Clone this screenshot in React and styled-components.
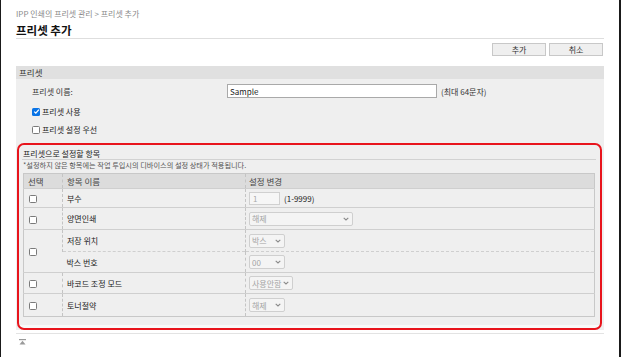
import React from "react";
import styled, { createGlobalStyle } from "styled-components";

const GlobalStyle = createGlobalStyle`
  html, body {
    margin: 0;
    padding: 0;
    background: #fff;
  }
  body {
    font-family: "Noto Sans CJK KR", "Noto Sans", sans-serif;
    color: #333;
  }
`;

const Frame = styled.div`
  width: 621px;
  height: 357px;
  box-sizing: border-box;
  border-left: 1px solid #1a1a1a;
  border-right: 2px solid #1a1a1a;
  padding: 0 15px;
  overflow: hidden;
`;

const Breadcrumb = styled.div`
  padding-top: 9px;
  font-size: 8px;
  line-height: 10px;
  color: #8a8a8a;
`;

const Title = styled.h1`
  margin: 4px 0 0;
  font-size: 11.5px;
  line-height: 15px;
  font-weight: 700;
  color: #111;
  border-bottom: 1px solid #dedede;
`;

const ButtonBar = styled.div`
  display: flex;
  justify-content: flex-end;
  gap: 3px;
  margin-top: 4px;
  padding-right: 1px;
`;

const Button = styled.button`
  width: 54px;
  height: 13px;
  padding: 0;
  border: 1px solid #c8c8c8;
  background: #efefef;
  font-family: inherit;
  font-size: 8px;
  line-height: 11px;
  color: #333;
`;

const SectionHeader = styled.div`
  margin-top: 10px;
  height: 13px;
  padding-left: 3px;
  background: #e0e0e0;
  font-size: 8.5px;
  line-height: 13px;
  color: #333;
`;

const Panel = styled.div`
  background: #efefef;
  padding-top: 5px;
`;

const FieldRow = styled.div`
  display: flex;
  align-items: center;
  height: 14px;
  padding-left: 16px;
  font-size: 8px;
`;

const Label = styled.span`
  width: 195px;
  color: #333;
`;

const TextInput = styled.input`
  width: 210px;
  height: 14px;
  box-sizing: border-box;
  border: 1px solid #a9a9a9;
  padding: 0 2px;
  font-family: inherit;
  font-size: 8px;
  color: #222;
  background: #fff;
  outline: none;
`;

const Hint = styled.span`
  margin-left: 4px;
  color: #333;
`;

const CheckRow = styled.label`
  display: flex;
  align-items: center;
  gap: 2px;
  height: 15px;
  padding-left: 16px;
  margin-top: ${(p) => (p.$first ? 6 : 3)}px;
  font-size: 8px;
  color: #222;
`;

const Box = styled.span`
  display: inline-flex;
  align-items: center;
  justify-content: center;
  width: 8px;
  height: 8px;
  box-sizing: border-box;
  border-radius: 1.5px;
  border: ${(p) => (p.$checked ? "none" : "1px solid #7a7a7a")};
  background: ${(p) => (p.$checked ? "#0a74e6" : "#fff")};
  flex: none;
  vertical-align: middle;
`;

function Check({ checked }) {
  return (
    <Box $checked={checked}>
      {checked && (
        <svg width="7" height="7" viewBox="0 0 7 7">
          <path d="M1.2 3.6 L2.8 5.1 L5.9 1.6" stroke="#fff" strokeWidth="1.3" fill="none" />
        </svg>
      )}
    </Box>
  );
}

const Highlight = styled.div`
  margin: 6px 2px 0 1px;
  padding: 0 4px 11px 3px;
  border: 2px solid #e8141c;
  border-radius: 7px;
  background: linear-gradient(to bottom, #efefef calc(100% - 3px), #f9f9f9 0);
`;

const BoxTitle = styled.div`
  padding: 3px 0 0 1px;
  font-size: 8px;
  line-height: 11px;
  color: #222;
  border-bottom: 1px solid #d2d2d2;
`;

const Note = styled.div`
  padding-left: 1px;
  font-size: 7.2px;
  line-height: 10px;
  color: #555;
`;

const Table = styled.table`
  width: calc(100% - 2px);
  margin: 3px 1px 0;
  border-collapse: collapse;
  table-layout: fixed;
  border: 1px solid #c8c8c8;
  font-size: 8px;
  color: #222;
`;

const HeadRow = styled.tr`
  height: 15px;
  background: #dcdcdc;
`;

const Th = styled.th`
  box-sizing: border-box;
  padding: 0 0 0 ${(p) => p.$pad || 4}px;
  width: ${(p) => (p.$w ? `${p.$w}px` : "auto")};
  text-align: left;
  font-weight: 400;
  font-size: 8.5px;
  color: #444;
  border-left: 1px dashed #c4c4c4;
  &:first-child {
    border-left: none;
  }
`;

const Row = styled.tr`
  height: ${(p) => p.$h}px;
  border-top: ${(p) => (p.$dashed ? "1px dashed #cfcfcf" : "1px solid #cfcfcf")};
`;

const Td = styled.td`
  padding: 0 0 0 ${(p) => p.$pad || 4}px;
  vertical-align: middle;
  border-left: 1px dashed #c4c4c4;
  &:first-child {
    border-left: none;
  }
`;

const CheckCell = styled(Td)`
  padding-left: 5px;
  border-left: none;
`;

const NumInput = styled.span`
  display: inline-flex;
  align-items: center;
  width: 31px;
  height: 13px;
  box-sizing: border-box;
  border: 1px solid #d0d0d0;
  padding-left: 3px;
  background: #f6f6f6;
  color: #aaa;
  vertical-align: middle;
`;

const Range = styled.span`
  margin-left: 4px;
  vertical-align: middle;
`;

const SelectBox = styled.span`
  display: inline-flex;
  align-items: center;
  justify-content: space-between;
  width: ${(p) => p.$w}px;
  height: 14px;
  box-sizing: border-box;
  padding: 0 3px 0 2px;
  border: 1px solid #cfcfcf;
  border-radius: 2px;
  background: #f4f4f4;
  color: #a4a4a4;
  vertical-align: middle;
`;

function Select({ w, value }) {
  return (
    <SelectBox $w={w}>
      <span>{value}</span>
      <svg width="6" height="4" viewBox="0 0 6 4">
        <path d="M0.7 0.8 L3 3 L5.3 0.8" stroke="#8a8a8a" strokeWidth="1.1" fill="none" />
      </svg>
    </SelectBox>
  );
}

const Footer = styled.div`
  display: flex;
  align-items: flex-start;
  margin-top: 3px;
  border-top: 1px solid #e3e3e3;
  padding: 5px 0 0 3px;
`;

export default function App() {
  return (
    <>
      <GlobalStyle />
      <Frame>
        <Breadcrumb>IPP 인쇄의 프리셋 관리 &gt; 프리셋 추가</Breadcrumb>
        <Title>프리셋 추가</Title>
        <ButtonBar>
          <Button>추가</Button>
          <Button>취소</Button>
        </ButtonBar>
        <SectionHeader>프리셋</SectionHeader>
        <Panel>
          <FieldRow>
            <Label>프리셋 이름:</Label>
            <TextInput defaultValue="Sample" />
            <Hint>(최대 64문자)</Hint>
          </FieldRow>
          <CheckRow $first>
            <Check checked />
            프리셋 사용
          </CheckRow>
          <CheckRow>
            <Check />
            프리셋 설정 우선
          </CheckRow>
          <Highlight>
            <BoxTitle>프리셋으로 설정할 항목</BoxTitle>
            <Note>*설정하지 않은 항목에는 작업 투입시의 디바이스의 설정 상태가 적용됩니다.</Note>
            <Table>
              <thead>
                <HeadRow>
                  <Th $w={39}>선택</Th>
                  <Th $w={183}>항목 이름</Th>
                  <Th $pad={3}>설정 변경</Th>
                </HeadRow>
              </thead>
              <tbody>
                <Row $h={19}>
                  <CheckCell><Check /></CheckCell>
                  <Td>부수</Td>
                  <Td $pad={3}>
                    <NumInput>1</NumInput>
                    <Range>(1-9999)</Range>
                  </Td>
                </Row>
                <Row $h={22}>
                  <CheckCell><Check /></CheckCell>
                  <Td>양면인쇄</Td>
                  <Td $pad={3}><Select w={104} value="해제" /></Td>
                </Row>
                <Row $h={22}>
                  <CheckCell rowSpan={2}><Check /></CheckCell>
                  <Td>저장 위치</Td>
                  <Td $pad={3}><Select w={36} value="박스" /></Td>
                </Row>
                <Row $h={21} $dashed>
                  <Td>박스 번호</Td>
                  <Td $pad={3}><Select w={36} value="00" /></Td>
                </Row>
                <Row $h={21}>
                  <CheckCell><Check /></CheckCell>
                  <Td>바코드 조정 모드</Td>
                  <Td $pad={3}><Select w={44} value="사용안함" /></Td>
                </Row>
                <Row $h={23}>
                  <CheckCell><Check /></CheckCell>
                  <Td>토너절약</Td>
                  <Td $pad={3}><Select w={36} value="해제" /></Td>
                </Row>
              </tbody>
            </Table>
          </Highlight>
        </Panel>
        <Footer>
          <svg width="7" height="6" viewBox="0 0 7 6">
            <rect x="0" y="0" width="7" height="1.2" fill="#9a9a9a" />
            <path d="M3.5 1.8 L6.5 5.6 L0.5 5.6 Z" fill="#9a9a9a" />
          </svg>
        </Footer>
      </Frame>
    </>
  );
}
